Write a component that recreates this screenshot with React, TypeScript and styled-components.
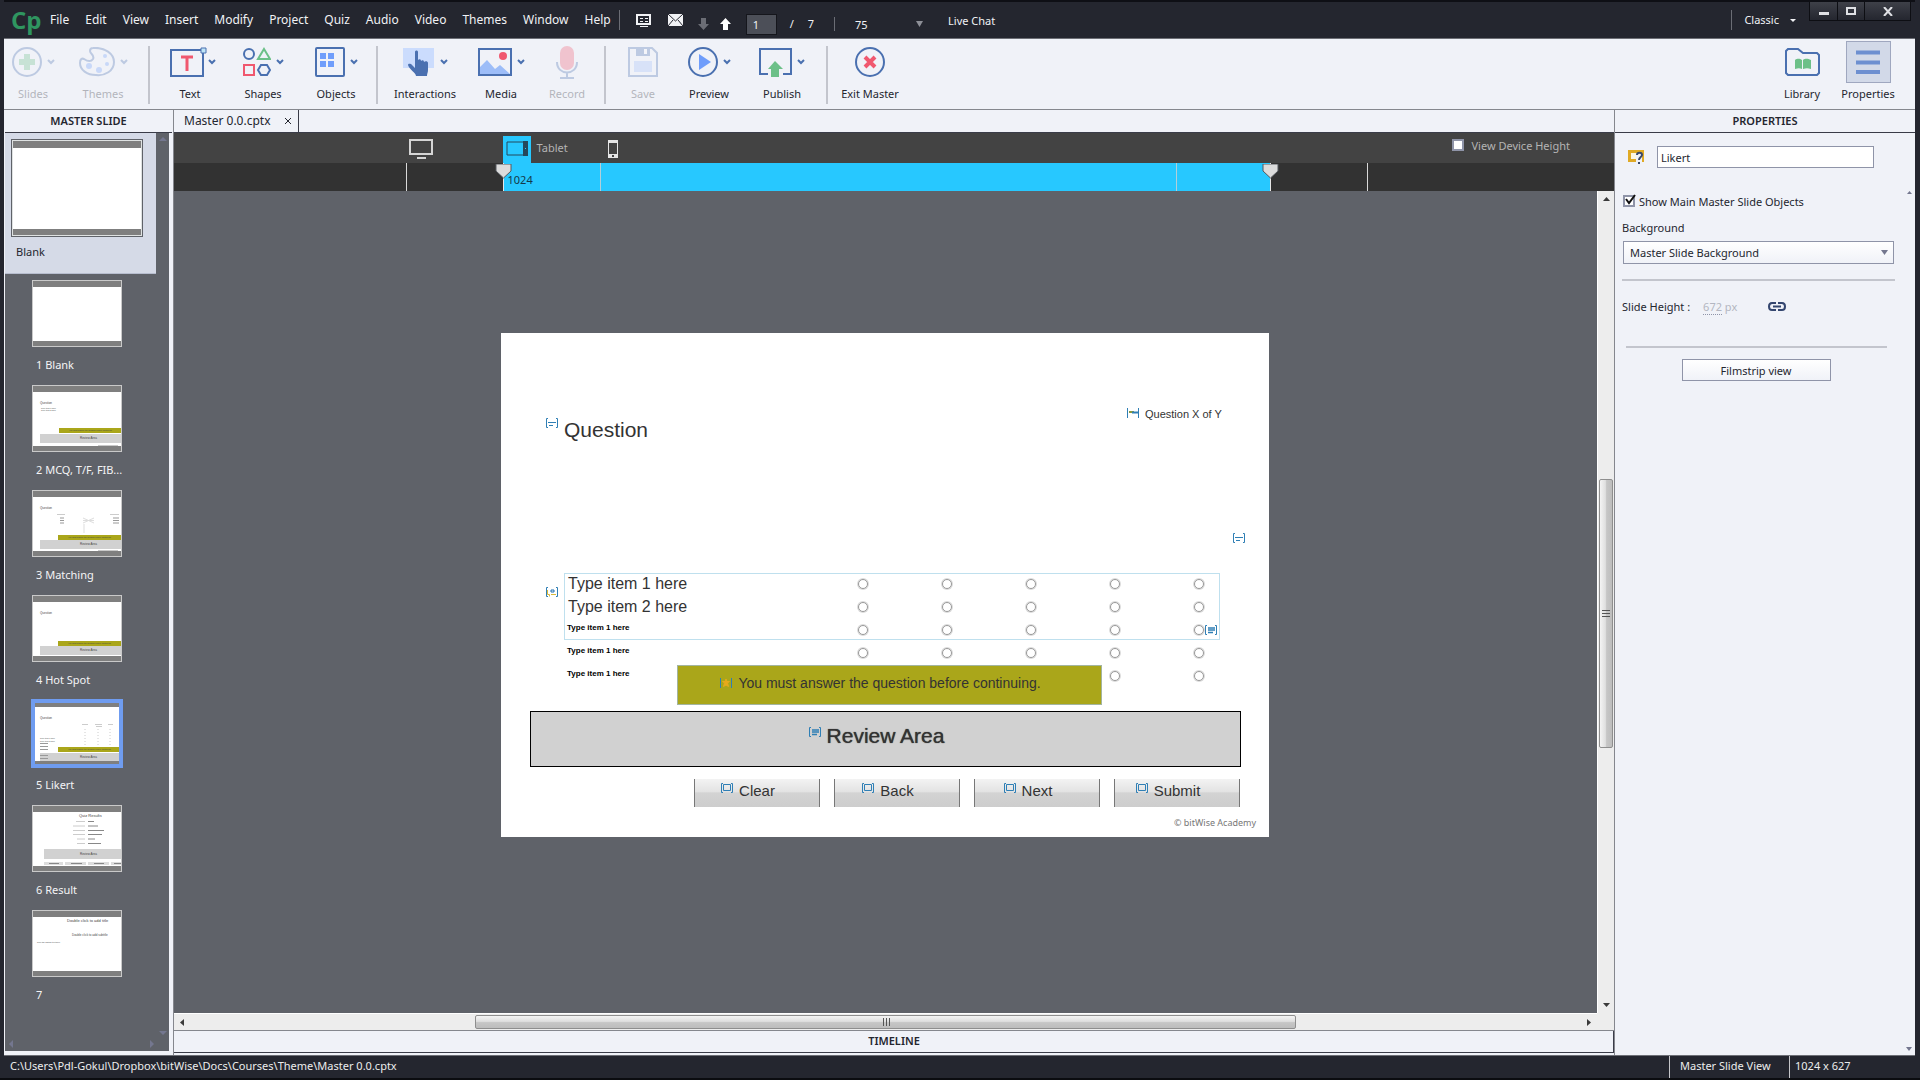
import React from 'react';
import styled, { createGlobalStyle, css } from 'styled-components';

const UI = '"Noto Sans", "Open Sans", sans-serif';
const SLIDE = '"Liberation Sans", Arial, sans-serif';

const c = {
  dark: '#24262f',
  panel: '#f0f2f8',
  canvas: '#5f6269',
  line: '#85878e',
  edge: '#3a3c48',
  blue: '#4a70b0',
  sky: '#6f9dfb',
  green: '#6cc088',
  red: '#f0586f',
  cyan: '#27c8ff',
  ink: '#24262f',
};

const Global = createGlobalStyle`
  *, *::before, *::after { box-sizing: border-box; }
  body { margin: 0; background: #101116; font-family: ${UI}; font-size: 11px; color: ${c.ink}; }
  button, input, select { font: inherit; color: inherit; margin: 0; }
  button { padding: 0; border: 0; background: none; cursor: pointer; }
  svg { display: block; flex: none; }
`;

const Window = styled.div`
  display: flex;
  flex-direction: column;
  min-height: 100vh;
  padding: 0 5px 0 4px;
  border-bottom: 2px solid #0b0c10;
  background: ${c.dark};
`;

/* ---------- title bar ---------- */

const TitleBar = styled.header`
  display: flex;
  align-items: center;
  height: 39px;
  padding: 0 4px 0 7px;
  border-top: 2px solid #0e0f15;
  border-bottom: 1px solid #6d6f76;
  color: #f1f2f5;
`;

const Logo = styled.span`
  width: 31px;
  font: bold 24px/32px 'Liberation Sans Narrow', 'Open Sans', sans-serif;
  color: #2f9560;
`;

const Menu = styled.nav`
  display: flex;
`;

const MenuItem = styled.button`
  padding: 0 8px;
  font-size: 12px;
  line-height: 20px;
`;

const BarRule = styled.span<{ $h?: number }>`
  width: 1px;
  height: ${(p) => p.$h ?? 20}px;
  background: #6b6d75;
`;

const QuickTools = styled.div`
  display: flex;
  align-items: center;
  padding-left: 16px;
`;

const PageNav = styled.div`
  display: flex;
  align-items: center;
  padding-top: 8px;
`;

const QuickButton = styled.button<{ $w: number }>`
  display: flex;
  width: ${(p) => p.$w}px;
`;

const PageInput = styled.input`
  width: 31px;
  height: 21px;
  padding: 0 6px;
  border: 1px solid #15161c;
  background: #4c4f58;
  outline: 0;
`;

const PageTotal = styled.span`
  display: flex;
  gap: 14px;
  padding: 0 20px 0 13px;
  line-height: 20px;
`;

const SelectWrap = styled.div`
  position: relative;
  display: flex;
  align-items: center;

  svg {
    position: absolute;
    right: 4px;
    pointer-events: none;
  }
`;

const ZoomSelect = styled.select`
  width: 92px;
  height: 21px;
  padding: 0 0 0 20px;
  border: 0;
  appearance: none;
  background: transparent;
  outline: 0;
`;

const ChatButton = styled.button`
  padding: 2px 0 0 21px;
  line-height: 20px;
`;

const TitleRight = styled.div`
  display: flex;
  align-items: center;
  align-self: stretch;
  margin-left: auto;
`;

const Workspace = styled.button`
  display: flex;
  align-items: center;
  gap: 11px;
  padding: 0 13px 0 12px;
  line-height: 20px;
`;

const Caption = styled.div`
  display: flex;
  align-self: flex-start;
  border: 1px solid #0d0e13;
  border-top: 0;
`;

const CaptionButton = styled.button<{ $w: number }>`
  display: flex;
  align-items: center;
  justify-content: center;
  width: ${(p) => p.$w}px;
  height: 18px;
  background: linear-gradient(#3e4048, #24262f);

  & + & {
    border-left: 1px solid #0d0e13;
  }
`;

/* ---------- tool bar ---------- */

const ToolBar = styled.div`
  display: flex;
  height: 71px;
  padding-right: 15px;
  border-bottom: 1px solid ${c.line};
  background: ${c.panel};
`;

const Tool = styled.button<{ $w: number }>`
  display: flex;
  flex-direction: column;
  align-items: center;
  width: ${(p) => p.$w}px;
  white-space: nowrap;

  &:disabled {
    opacity: 0.3;
    color: ${c.ink};
    cursor: default;
  }
`;

const ToolIcon = styled.span<{ $on?: boolean }>`
  display: flex;
  align-items: center;
  justify-content: center;
  gap: 5px;
  height: 42px;
  margin: 2px 0;
  ${(p) =>
    p.$on &&
    css`
      width: 45px;
      border: 1px solid #9fa7bf;
      background: #d2d9e8;
    `}
`;

const ToolLabel = styled.span`
  line-height: 18px;
`;

const ToolRule = styled.span`
  width: 2px;
  height: 58px;
  margin: 7px 4px 0;
  background: #c3c5cd;
`;

const Push = styled.span`
  flex: 1;
`;

/* ---------- panels ---------- */

const Body = styled.div`
  display: grid;
  grid-template-columns: 170px minmax(0, 1fr) 301px;
  flex: 1;
  background: ${c.panel};
`;

const PanelTitle = styled.h2`
  height: 23px;
  margin: 0;
  border-bottom: 1px solid ${c.edge};
  font-size: 11px;
  font-weight: 600;
  line-height: 21px;
  text-align: center;
`;

const LeftPanel = styled.aside`
  display: flex;
  flex-direction: column;
  padding: 0 1px 4px 1px;
  border-right: 1px solid ${c.line};
`;

const ListArea = styled.div`
  display: grid;
  grid-template-columns: 1fr 13px;
  flex: 1;
  margin-right: 3px;
  background: ${c.canvas};
`;

const ListScroll = styled.div`
  display: flex;
  flex-direction: column;
  justify-content: space-between;
  align-items: center;
  padding: 4px 0 16px;
`;

const SlideList = styled.div`
  display: flex;
  flex-direction: column;
`;

const ListFoot = styled.div`
  display: flex;
  justify-content: space-between;
  margin-top: auto;
  padding: 0 2px 3px 4px;
`;

const MasterCard = styled.button`
  display: flex;
  flex-direction: column;
  align-items: flex-start;
  height: 141px;
  margin-bottom: 6px;
  padding: 6px;
  border-bottom: 1px solid #b7bdce;
  background: #d5dae7;
`;

const MasterThumb = styled.span`
  width: 132px;
  height: 99px;
  border: 1px solid #5f6269;
  outline: 0;
  background: linear-gradient(#7f7f7f 0 8px, #fff 8px 89px, #7f7f7f 89px);
  box-shadow: inset 0 0 0 1px #dfe2e2;
`;

const MasterName = styled.span`
  padding: 6px 5px;
  line-height: 18px;
`;

const Item = styled.button`
  display: flex;
  flex-direction: column;
  align-items: flex-start;
  height: 105px;
  padding-left: 27px;
  color: #f4f4f6;
`;

const Thumb = styled.span<{ $on?: boolean }>`
  width: 90px;
  height: 67px;
  border: 1px solid #c9c9c9;
  background: #fff;
  ${(p) =>
    p.$on &&
    css`
      overflow: hidden;
      border: 3px solid #6f9cf0;
      box-shadow: 0 0 0 1px #6f9cf0;

      svg {
        margin: -2px;
      }
    `}
`;

const ItemName = styled.span`
  padding: 8px 4px 0;
  line-height: 20px;
`;

/* ---------- stage ---------- */

const Center = styled.main`
  display: flex;
  flex-direction: column;
  min-width: 0;
`;

const Tabs = styled.div`
  display: flex;
  height: 23px;
  border-bottom: 1px solid ${c.edge};
`;

const Tab = styled.div`
  display: flex;
  align-items: center;
  gap: 14px;
  padding: 0 7px 0 10px;
  border-right: 1px solid ${c.edge};
  font-size: 12px;
  line-height: 22px;
`;

const DeviceStrip = styled.div`
  display: grid;
  grid-template-columns: 1fr 960px 1fr;
  height: 30px;
  padding-right: 17px;
  background: #434343;
  color: #b4b4b4;
`;

const Devices = styled.div`
  display: flex;
  grid-column: 2;
  align-items: flex-end;
`;

const DeviceButton = styled.button<{ $w: number; $on?: boolean }>`
  display: flex;
  align-items: center;
  justify-content: center;
  width: ${(p) => p.$w}px;
  height: 27px;
  padding-bottom: 2px;
  background: ${(p) => (p.$on ? c.cyan : 'transparent')};
`;

const DeviceName = styled.span`
  width: 70px;
  padding: 0 6px;
  line-height: 30px;
`;

const DeviceGap = styled.span`
  width: 67px;
`;

const HeightCheck = styled.label`
  display: flex;
  align-items: center;
  gap: 8px;
  padding: 0 0 6px 86px;
  white-space: nowrap;
`;

const Check = styled.input`
  width: 12px;
  height: 12px;
  border: 2px solid #8f94a8;
  appearance: none;
  background: #fff;
`;

const Ruler = styled.div`
  display: flex;
  justify-content: center;
  height: 28px;
  padding-right: 15px;
  background: #323232;
`;

const RulerSide = styled.div<{ $end?: boolean }>`
  width: 97px;
  border: 0 solid #d9d9d9;
  border-width: ${(p) => (p.$end ? '0 1px 0 0' : '0 0 0 1px')};
`;

const RulerSpan = styled.div`
  position: relative;
  display: grid;
  grid-template-columns: 96px 1fr 94px;
  grid-template-rows: 100%;
  width: 768px;
  border: 1px solid #e6e6e6;
  border-width: 0 1px;
  background: ${c.cyan};
  color: #14394a;

  span {
    padding-left: 4px;
    line-height: 34px;
  }

  span + span {
    border-left: 1px solid #b3cfd9;
  }
`;

const Handle = styled.button<{ $end?: boolean }>`
  position: absolute;
  top: 1px;
  ${(p) => (p.$end ? 'right' : 'left')}: -9px;
`;

const Stage = styled.div`
  display: grid;
  grid-template-columns: minmax(0, 1fr) 17px;
  grid-template-rows: 1fr 17px;
  flex: 1;
  background: ${c.canvas};
`;

const Canvas = styled.div`
  display: flex;
  align-items: center;
  justify-content: center;
  padding: 0 1px 34px 0;
`;

const VScroll = styled.div`
  display: flex;
  flex-direction: column;
  align-items: center;
  border-left: 1px solid #fff;
  background: #ededed;
`;

const HScroll = styled.div`
  display: flex;
  align-items: center;
  border-top: 1px solid #fff;
  background: #ededed;
`;

const Corner = styled.div`
  background: #ededed;
`;

const ScrollArrow = styled.button`
  display: flex;
  align-items: center;
  justify-content: center;
  width: 16px;
  height: 16px;
`;

const Track = styled.span<{ $n: number }>`
  flex: ${(p) => p.$n} 1 0;
`;

const Grip = styled.div<{ $n: number; $v?: boolean }>`
  display: flex;
  align-items: center;
  justify-content: center;
  flex: ${(p) => p.$n} 1 0;
  ${(p) => (p.$v ? 'width' : 'height')}: 14px;
  border: 1px solid #8e8e8e;
  border-radius: 2px;
  background: linear-gradient(${(p) => (p.$v ? '90deg' : '180deg')}, #f4f4f4, #dfdfdf 45%, #c6c6c6 55%, #bdbdbd);
`;

const Timeline = styled.h2`
  height: 25px;
  margin: 0;
  border-top: 1px solid ${c.line};
  box-shadow: inset 0 -2px 0 ${c.panel}, inset 0 -3px 0 ${c.edge}, inset -1px 0 0 ${c.edge};
  font-size: 11px;
  font-weight: 600;
  line-height: 20px;
  text-align: center;
`;

/* ---------- slide objects on the free canvas ---------- */

const Slide = styled.section`
  position: relative;
  flex: none;
  width: 768px;
  height: 504px;
  background: #fff;
  color: #333;
  font-family: ${SLIDE};
`;

const Placed = styled.div<{ $x: number; $y: number; $w?: number; $h?: number }>`
  position: absolute;
  left: ${(p) => p.$x}px;
  top: ${(p) => p.$y}px;
  width: ${(p) => (p.$w ? `${p.$w}px` : 'auto')};
  height: ${(p) => (p.$h ? `${p.$h}px` : 'auto')};
  white-space: nowrap;
`;

const Tagged = styled.span`
  position: relative;

  svg {
    position: absolute;
    right: 100%;
    top: 0;
    margin-right: 6px;
  }
`;

const Heading = styled(Placed)`
  font-size: 21px;
  line-height: 24px;
`;

const Progress = styled(Placed)`
  font-size: 11px;
  line-height: 12px;
`;

const LikertFrame = styled(Placed)`
  border: 1px solid #bfe0ee;
`;

const LikertRow = styled.div<{ $small?: boolean }>`
  display: grid;
  grid-template-columns: 257px repeat(5, 84px);
  align-items: center;
  height: 23px;
  font-size: ${(p) => (p.$small ? 8 : 16)}px;
  font-weight: ${(p) => (p.$small ? 'bold' : 'normal')};
  color: ${(p) => (p.$small ? '#000' : '#333')};
`;

const RowText = styled.span<{ $small?: boolean }>`
  padding: ${(p) => (p.$small ? '0 0 5px 3px' : '0 0 0 4px')};
`;

const Radio = styled.input`
  justify-self: center;
  width: 10px;
  height: 10px;
  margin: 0;
  border: 1px solid #9a9a9a;
  border-radius: 50%;
  appearance: none;
  background: #fff;
  box-shadow: 0 0 0 1px #dcdcdc;
`;

const Warning = styled(Placed)`
  border: 1px solid #a3b5a0;
  background: #aaa61a;
  font-size: 14px;
  line-height: 34px;
  text-align: center;

  svg {
    top: 3px;
  }
`;

const Review = styled(Placed)`
  border: 1px solid #000;
  background: #d1d1d1;
  font-size: 21px;
  line-height: 47px;
  text-align: center;
  text-shadow: 0 0 1px #333;

  svg {
    top: 3px;
  }
`;

const NavRow = styled(Placed)`
  display: grid;
  grid-template-columns: repeat(4, 126px);
  justify-content: space-between;
`;

const NavButton = styled.button`
  height: 28px;
  padding-bottom: 6px;
  border: 1px solid #777;
  border-width: 0 1px;
  background: linear-gradient(#f3f3f3, #e3e3e3 45%, #d3d3d3 50%, #cdcdcd);
  font-size: 15px;

  svg {
    top: 1px;
  }
`;

const Copyright = styled(Placed)`
  font-family: ${UI};
  font-size: 9px;
  line-height: 12px;
  color: #777;
`;

/* ---------- properties ---------- */

const RightPanel = styled.aside`
  display: flex;
  flex-direction: column;
  border-left: 1px solid ${c.line};
`;

const PropBody = styled.form`
  display: grid;
  grid-template-columns: 1fr 12px;
  flex: 1;
`;

const Fields = styled.div`
  display: flex;
  flex-direction: column;
  padding: 13px 8px 0 7px;
`;

const NameRow = styled.div`
  display: flex;
  align-items: center;
  gap: 13px;
  padding: 0 21px 0 6px;

  input {
    flex: 1;
    min-width: 0;
    height: 22px;
    padding: 0 3px;
    border: 1px solid #8f94a8;
    background: #fff;
    outline: 0;
  }
`;

const CheckRow = styled.label`
  display: flex;
  align-items: center;
  gap: 4px;
  height: 20px;
  margin-top: 23px;
  padding-left: 1px;
`;

const TickBox = styled.span`
  position: relative;
  display: flex;

  svg {
    position: absolute;
    top: -1px;
    left: 0;
    pointer-events: none;
  }
`;

const FieldLabel = styled.label`
  margin-top: 7px;
  line-height: 20px;
`;

const BackgroundSelect = styled.select`
  width: 100%;
  height: 23px;
  padding: 0 6px;
  border: 1px solid #8f94a8;
  appearance: none;
  background: linear-gradient(#fff, #f0f2f8);
  outline: 0;
`;

const SelectRow = styled(SelectWrap)`
  margin: 3px 1px 0;

  svg {
    right: 6px;
  }
`;

const Divider = styled.hr<{ $inset?: boolean }>`
  width: auto;
  height: 2px;
  margin: ${(p) => (p.$inset ? '30px 8px 0 4px' : '15px 0 15px')};
  border: 0;
  background: #c3c5cd;
`;

const HeightRow = styled.div`
  display: flex;
  align-items: center;
  height: 20px;
`;

const HeightValue = styled.span`
  width: 65px;
  margin-left: 13px;
  color: #b3b6c1;

  u {
    text-decoration: none;
    border-bottom: 1px dotted #8f94a8;
  }
`;

const FilmButton = styled.button`
  align-self: center;
  width: 149px;
  height: 22px;
  margin: 11px 5px 0 0;
  border: 1px solid #8f94a8;
  background: linear-gradient(#fff, #f0f2f8);
`;

const PropScroll = styled.div`
  display: flex;
  flex-direction: column;
  align-items: center;
  justify-content: space-between;
  padding: 58px 0 4px;
`;

/* ---------- status bar ---------- */

const Status = styled.footer`
  display: flex;
  height: 23px;
  padding: 0 0 0 6px;
  border-top: 1px solid #6d6f76;
  color: #eceded;
  line-height: 19px;
`;

const StatusCell = styled.span<{ $w: number }>`
  width: ${(p) => p.$w}px;
  padding-left: ${(p) => (p.$w > 121 ? 5 : 10)}px;
  border-left: 1px solid #c5c6ca;
`;

/* ---------- drawings ---------- */

const Arrow = ({ d, fill = '#3a3a3a', w = 8, h = 4 }: { d: 'u' | 'd' | 'l' | 'r'; fill?: string; w?: number; h?: number }) => {
  const side = d === 'l' || d === 'r';
  const W = side ? h : w;
  const H = side ? w : h;
  const pts = {
    u: `0,${H} ${W / 2},0 ${W},${H}`,
    d: `0,0 ${W},0 ${W / 2},${H}`,
    l: `${W},0 0,${H / 2} ${W},${H}`,
    r: `0,0 ${W},${H / 2} 0,${H}`,
  }[d];
  return (
    <svg width={W} height={H} aria-hidden="true">
      <polygon points={pts} fill={fill} />
    </svg>
  );
};

const Chevron = () => (
  <svg width="8" height="6" viewBox="0 0 8 6" fill="none" stroke={c.blue} strokeWidth="2">
    <path d="M1 1l3 3 3-3" />
  </svg>
);

const Tag = ({ kind = 'text' }: { kind?: 'text' | 'solid' | 'star' | 'box' | 'arrow' | 'count' }) => (
  <svg width="12" height="10" viewBox="0 0 12 10" fill="none" stroke="#2f7fb5">
    {kind === 'star' || kind === 'count' ? <path d="M.5 0v10M11.5 0v10" /> : <path d="M2 .5H.5v9H2M10 .5h1.500v9H10" />}
    {kind === 'text' && <path d="M2 4.500h8M3 7.500h4" />}
    {kind === 'solid' && <path d="M3 3h7M3 5h7M3 7.500h5" strokeWidth="1.500" />}
    {kind === 'box' && <path d="M2.500 1.500h7v6h-7z" />}
    {kind === 'star' && <path d="M6 1l1 2.500h2.500L7.500 5l1 3.500L6 7 3.500 8.500l1-3.500-2-1.500H5z" fill="#e7a91b" stroke="#e7a91b" />}
    {kind === 'count' && (
      <>
        <path d="M2 4h5" stroke="#8a9a3c" strokeWidth="2" />
        <path d="M5 4.500h6" strokeWidth="2" />
      </>
    )}
    {kind === 'arrow' && (
      <>
        <path d="M5 3h3v2H5z" stroke="#1f6fb0" />
        <path d="M1.500 3v4.500h2v2M5 7.500h5" stroke="#d8b93a" />
      </>
    )}
  </svg>
);

const Bars = ({ children }: { children?: React.ReactNode }) => (
  <svg width="88" height="65" viewBox="0 0 88 65" fontFamily={SLIDE} fill="#444">
    {children}
    <rect width="88" height="6" fill="#7f7f7f" />
    <rect y="60" width="88" height="5" fill="#7f7f7f" />
  </svg>
);

const QuizBase = ({ y, r, x = 25 }: { y: number; r: number; x?: number }) => (
  <>
    <text x="7" y="18" fontSize="3">Question</text>
    <rect x={x} y={y} width={88 - x} height="5" fill="#aaa61a" />
    <text x={x + 10} y={y + 3} fontSize="2">You must answer the question before continuing.</text>
    <rect x="7" y={r} width="81" height="9" fill="#d1d1d1" />
    <text x="47" y={r + 5} fontSize="3">Review Area</text>
  </>
);

const thumbs: { name: string; on?: boolean; art: React.ReactNode }[] = [
  { name: '1 Blank', art: <Bars /> },
  {
    name: '2 MCQ, T/F, FIB...',
    art: (
      <Bars>
        <QuizBase y={42} r={48} x={26} />
        <text x="8" y="23" fontSize="2">Type item 1 here</text>
        <text x="8" y="25" fontSize="2">Type item 2 here</text>
        <path d="M65 59.500h20" stroke="#c9c9c9" />
      </Bars>
    ),
  },
  {
    name: '3 Matching',
    art: (
      <Bars>
        <QuizBase y={44} r={49} />
        <path d="M24 23.500h8M77 23.500h9" stroke="#ccc" />
        <path d="M27 27h4M27 29.500h4M27 32h4M80 27h6M80 29.500h6M80 32h6" stroke="#999" />
        <path d="M50 27l11 5M50 29.500h11M50 32l11-5M51 33v9" stroke="#ddd" />
        <path d="M65 59.500h20" stroke="#c9c9c9" />
      </Bars>
    ),
  },
  { name: '4 Hot Spot', art: <Bars><QuizBase y={45} r={50} /></Bars> },
  {
    name: '5 Likert',
    on: true,
    art: (
      <Bars>
        <QuizBase y={46} r={52} />
        <path d="M49 23.500h6M62 23.500h7M63 25.500h6M75 23.500h5" stroke="#ccc" />
        <text x="7" y="38" fontSize="2">Type item 1 here</text>
        <text x="7" y="41" fontSize="2">Type item 2 here</text>
        <path d="M7 42.500h8M7 45.500h8M7 48.500h8M7 54.500h8M7 57.500h8" stroke="#999" />
        <path d="M52 28v18M65 28v18M77 28v18" stroke="#ccc" strokeDasharray="1 2" />
      </Bars>
    ),
  },
  {
    name: '6 Result',
    art: (
      <Bars>
        <text x="46" y="11" fontSize="4">Quiz Results</text>
        <path d="M43 15.500h9M40 20h12M40 24.500h12M40 28.500h12M44 33h8M44 37.500h8" stroke="#ccc" />
        <path d="M55 15.500h6M55 20h10M55 24.500h16M55 28.500h14M55 33h7M55 37.500h13" stroke="#888" />
        <rect x="11" y="43" width="77" height="10" fill="#d1d1d1" />
        <text x="47" y="49" fontSize="3">Review Area</text>
        <path d="M11 57.500h19M32 57.500h21M55 57.500h21M78 57.500h10" stroke="#ddd" strokeWidth="3" />
        <path d="M16 57.500h10M38 57.500h11M61 57.500h10M81 57.500h7" stroke="#888" />
      </Bars>
    ),
  },
  {
    name: '7',
    art: (
      <Bars>
        <text x="34" y="11" fontSize="4">Double click to add title</text>
        <text x="39" y="25" fontSize="3">Double click to add subtitle</text>
        <text x="4" y="32" fontSize="2">Type the caption text here</text>
      </Bars>
    ),
  },
];

const line = { fill: 'none', stroke: c.blue, strokeWidth: 2 } as const;

const art = {
  slides: (
    <svg width="30" height="30" viewBox="0 0 30 30">
      <circle cx="15" cy="15" r="14" {...line} />
      <path d="M12 7h6v5h5v6h-5v5h-6v-5H7v-6h5z" fill={c.green} />
    </svg>
  ),
  themes: (
    <svg width="36" height="30" viewBox="0 0 36 30">
      <path d="M14 1c12-1 21 6 21 14 0 9-9 14-18 13C8 28 1 23 1 16c0-4 2-5 4-4 3 2 7 3 9 0 2-4-3-5-3-8 0-2 1-3 3-3z" {...line} />
      <g fill={c.sky}>
        <circle cx="10" cy="19" r="3" />
        <circle cx="20" cy="23" r="3" />
        <circle cx="28" cy="17" r="2" />
        <circle cx="26" cy="9" r="2" />
      </g>
    </svg>
  ),
  text: (
    <svg width="39" height="30" viewBox="-6 0 39 30" overflow="visible">
      <path d="M1 3h32v26H1z" {...line} />
      <path d="M11 10h12M17 10v14" fill="none" stroke={c.red} strokeWidth="3" />
      <path d="M31 1h5v5h-5z" fill="#bfe4f7" stroke={c.blue} />
    </svg>
  ),
  shapes: (
    <svg width="28" height="30" viewBox="0 0 28 30">
      <circle cx="6" cy="7" r="5" {...line} />
      <path d="M21 2l6 10H15z" fill="none" stroke={c.green} strokeWidth="2" />
      <path d="M1 18h10v10H1z" fill="none" stroke={c.red} strokeWidth="2" />
      <path d="M18 18h6l3 5-3 5h-6l-3-5z" {...line} />
    </svg>
  ),
  objects: (
    <svg width="30" height="30" viewBox="0 0 30 30">
      <rect x="1" y="1" width="28" height="28" rx="1" {...line} />
      <path d="M5 6h6v6H5zM13 6h6v6h-6zM5 14h6v6H5zM13 14h6v6h-6z" fill={c.sky} />
    </svg>
  ),
  interactions: (
    <svg width="32" height="30" viewBox="0 0 32 30">
      <path d="M0 1h31v20H0z" fill="#cbdcfd" />
      <path d="M12 5c0-2 3-2 3 0v8c1-1 3-1 3 1 1-1 3-1 3 1 1-1 4-1 4 1v7c0 3-1 3-1 6H13c0-3-7-7-8-11 0-1 2-2 4 0l3 3z" fill={c.blue} />
    </svg>
  ),
  media: (
    <svg width="34" height="30" viewBox="0 0 34 30">
      <path d="M2 27V20l7-7 8 9 5-4 10 9z" fill="#9dbdf8" />
      <path d="M1 2h32v26H1z" {...line} />
      <circle cx="25" cy="9" r="4" fill={c.red} />
    </svg>
  ),
  record: (
    <svg width="22" height="33" viewBox="0 0 22 33">
      <rect x="4" y="0" width="14" height="24" rx="7" fill={c.red} />
      <path d="M1 16c0 14 20 14 20 0M11 26v6M4 32h14" {...line} />
    </svg>
  ),
  save: (
    <svg width="30" height="30" viewBox="0 0 30 30">
      <path d="M1 1h23l5 5v23H1z" {...line} />
      <path d="M8 1h14v8H8z" fill={c.blue} />
      <path d="M16 2h3v5h-3z" fill="#fff" />
      <path d="M6 14h18v11H6z" fill={c.sky} opacity=".6" />
    </svg>
  ),
  preview: (
    <svg width="30" height="30" viewBox="0 0 30 30">
      <circle cx="15" cy="15" r="14" {...line} />
      <path d="M11 7l12 8-12 8z" fill={c.sky} />
    </svg>
  ),
  publish: (
    <svg width="33" height="30" viewBox="0 0 33 30">
      <path d="M9 27H1V2h31v25h-8" {...line} />
      <path d="M16 14l8 8h-4v8h-8v-8H9z" fill={c.green} />
    </svg>
  ),
  exit: (
    <svg width="30" height="30" viewBox="0 0 30 30">
      <circle cx="15" cy="15" r="14" {...line} />
      <path d="M10 10l10 10M20 10L10 20" stroke={c.red} strokeWidth="4" />
    </svg>
  ),
  library: (
    <svg width="35" height="28" viewBox="0 0 35 28">
      <path d="M3 1h10l5 4h14l2 2v18l-2 2H3l-2-2V3z" {...line} />
      <path d="M10 12c3-2 5-1 7 0v9c-2-1-4-1-7 0zM18 12c3-2 5-1 8 0v9c-3-1-5-1-8 0z" fill={c.green} />
    </svg>
  ),
  properties: (
    <svg width="24" height="25" viewBox="0 0 24 25">
      <path d="M0 2.500h24M0 12.500h24M0 22h24" stroke="#6d8fd0" strokeWidth="4" />
    </svg>
  ),
};

type ToolSpec = { name: string; icon: keyof typeof art; w: number; more?: boolean; off?: boolean };

const groups: ToolSpec[][] = [
  [
    { name: 'Slides', icon: 'slides', w: 58, more: true, off: true },
    { name: 'Themes', icon: 'themes', w: 82, more: true, off: true },
  ],
  [
    { name: 'Text', icon: 'text', w: 72, more: true },
    { name: 'Shapes', icon: 'shapes', w: 74, more: true },
    { name: 'Objects', icon: 'objects', w: 72, more: true },
  ],
  [
    { name: 'Interactions', icon: 'interactions', w: 86, more: true },
    { name: 'Media', icon: 'media', w: 66, more: true },
    { name: 'Record', icon: 'record', w: 66, off: true },
  ],
  [
    { name: 'Save', icon: 'save', w: 66, off: true },
    { name: 'Preview', icon: 'preview', w: 66, more: true },
    { name: 'Publish', icon: 'publish', w: 80, more: true },
  ],
  [{ name: 'Exit Master', icon: 'exit', w: 76 }],
];

const menus = ['File', 'Edit', 'View', 'Insert', 'Modify', 'Project', 'Quiz', 'Audio', 'Video', 'Themes', 'Window', 'Help'];

const rows = [
  { text: 'Type item 1 here' },
  { text: 'Type item 2 here' },
  { text: 'Type item 1 here', small: true },
  { text: 'Type item 1 here', small: true },
  { text: 'Type item 1 here', small: true },
];

const ArrowIcon = ({ up, fill }: { up?: boolean; fill: string }) => (
  <svg width="11" height="12" viewBox="0 0 11 12">
    <path d={up ? 'M5.500 0L11 6H8v6H3V6H0z' : 'M5.500 12L11 6H8V0H3v6H0z'} fill={fill} />
  </svg>
);

const RulerHandle = () => (
  <svg width="17" height="15" viewBox="0 0 17 15">
    <path d="M1 0h15v7l-7.500 7L1 7z" fill="#dcdcdc" stroke="#55595e" />
  </svg>
);

const GripLines = ({ v }: { v?: boolean }) => (
  <svg width="8" height="8" viewBox="0 0 8 8">
    <path d={v ? 'M0 1.500h8M0 4.500h8M0 7.500h8' : 'M1.500 0v8M4.500 0v8M7.500 0v8'} stroke="#555" />
  </svg>
);

export default function App() {
  return (
    <Window>
      <Global />
      <TitleBar>
        <Logo>Cp</Logo>
        <Menu>
          {menus.map((m) => (
            <MenuItem key={m}>{m}</MenuItem>
          ))}
        </Menu>
        <BarRule />
        <QuickTools>
          <QuickButton $w={32} aria-label="Preview in browser">
            <svg width="15" height="13" viewBox="0 0 15 13" fill="none" stroke="#f1f2f5">
              <path d="M1 1h13v9H1z" strokeWidth="2" />
              <path d="M4 4.500h3M9 4.500h3M4 7.500h3M9 7.500h3M4 12.500h8" />
            </svg>
          </QuickButton>
          <QuickButton $w={30} aria-label="Mail">
            <svg width="15" height="12" viewBox="0 0 15 12">
              <path d="M0 0h15v12H0z" fill="#f1f2f5" />
              <path d="M0 0l7.500 7L15 0M0 12l5-6M15 12l-5-6" fill="none" stroke={c.dark} />
            </svg>
          </QuickButton>
          <PageNav>
            <QuickButton $w={22} aria-label="Next slide">
              <ArrowIcon fill="#6b6d75" />
            </QuickButton>
            <QuickButton $w={26} aria-label="Previous slide">
              <ArrowIcon up fill="#fff" />
            </QuickButton>
            <PageInput aria-label="Slide number" defaultValue="1" />
            <PageTotal>
              <span>/</span>
              <span>7</span>
            </PageTotal>
            <BarRule $h={14} />
            <SelectWrap>
              <ZoomSelect aria-label="Zoom">
                <option>75</option>
              </ZoomSelect>
              <Arrow d="d" fill="#8d8f97" w={7} h={6} />
            </SelectWrap>
          </PageNav>
          <ChatButton>Live Chat</ChatButton>
        </QuickTools>
        <TitleRight>
          <BarRule />
          <Workspace>
            Classic <Arrow d="d" fill="#f1f2f5" w={6} h={3} />
          </Workspace>
          <Caption>
            <CaptionButton $w={27} aria-label="Minimize">
              <svg width="10" height="8" viewBox="0 0 10 8">
                <path d="M0 5h10v3H0z" fill="#dfe0e4" />
              </svg>
            </CaptionButton>
            <CaptionButton $w={27} aria-label="Maximize">
              <svg width="10" height="8" viewBox="0 0 10 8">
                <path d="M1 1h8v6H1z" fill="none" stroke="#dfe0e4" strokeWidth="2" />
              </svg>
            </CaptionButton>
            <CaptionButton $w={46} aria-label="Close">
              <svg width="10" height="9" viewBox="0 0 10 9">
                <path d="M1 0l8 9M9 0L1 9" stroke="#dfe0e4" strokeWidth="2" />
              </svg>
            </CaptionButton>
          </Caption>
        </TitleRight>
      </TitleBar>

      <ToolBar>
        {groups.map((g, i) => (
          <React.Fragment key={i}>
            {i > 0 && <ToolRule />}
            {g.map((t) => (
              <Tool key={t.name} $w={t.w} disabled={t.off}>
                <ToolIcon>
                  {art[t.icon]}
                  {t.more && <Chevron />}
                </ToolIcon>
                <ToolLabel>{t.name}</ToolLabel>
              </Tool>
            ))}
          </React.Fragment>
        ))}
        <Push />
        <Tool $w={68}>
          <ToolIcon>{art.library}</ToolIcon>
          <ToolLabel>Library</ToolLabel>
        </Tool>
        <Tool $w={64}>
          <ToolIcon $on>{art.properties}</ToolIcon>
          <ToolLabel>Properties</ToolLabel>
        </Tool>
      </ToolBar>

      <Body>
        <LeftPanel>
          <PanelTitle>MASTER SLIDE</PanelTitle>
          <ListArea>
            <SlideList>
              <MasterCard>
                <MasterThumb />
                <MasterName>Blank</MasterName>
              </MasterCard>
              {thumbs.map((t) => (
                <Item key={t.name}>
                  <Thumb $on={t.on}>
                    {t.art}
                  </Thumb>
                  <ItemName>{t.name}</ItemName>
                </Item>
              ))}
              <ListFoot>
                <Arrow d="l" fill="#74778f" />
                <Arrow d="r" fill="#74778f" />
              </ListFoot>
            </SlideList>
            <ListScroll>
              <Arrow d="u" fill="#74778f" />
              <Arrow d="d" fill="#74778f" />
            </ListScroll>
          </ListArea>
        </LeftPanel>

        <Center>
          <Tabs>
            <Tab>
              Master 0.0.cptx
              <button aria-label="Close tab">
                <svg width="6" height="6" viewBox="0 0 6 6" stroke={c.ink}>
                  <path d="M0 0l6 6M6 0L0 6" />
                </svg>
              </button>
            </Tab>
          </Tabs>
          <DeviceStrip>
            <Devices>
              <DeviceButton $w={30} aria-label="Desktop">
                <svg width="24" height="20" viewBox="0 0 24 20">
                  <path d="M1 1h22v14H1z" fill="none" stroke="#d5d5d5" strokeWidth="2" />
                  <path d="M8 18h9v2H8z" fill="#d5d5d5" />
                </svg>
              </DeviceButton>
              <DeviceGap />
              <DeviceButton $w={28} $on aria-label="Tablet">
                <svg width="22" height="15" viewBox="0 0 22 15">
                  <path d="M1 1h20v13H1z" fill="none" stroke="#25485c" />
                  <path d="M17 0h5v15h-5z" fill="#25485c" />
                  <path d="M19 7h1v1h-1z" fill={c.cyan} />
                </svg>
              </DeviceButton>
              <DeviceName>Tablet</DeviceName>
              <DeviceButton $w={24} aria-label="Phone">
                <svg width="10" height="18" viewBox="0 0 10 18">
                  <path d="M0 0h10v18H0z" fill="#e6e6e6" />
                  <path d="M1 3h8v11H1zM4 15h2v2H4z" fill="#434343" />
                </svg>
              </DeviceButton>
            </Devices>
            <HeightCheck>
              <Check type="checkbox" />
              View Device Height
            </HeightCheck>
          </DeviceStrip>
          <Ruler>
            <RulerSide />
            <RulerSpan>
              <span>1024</span>
              <span />
              <span />
              <Handle aria-label="Left edge">
                <RulerHandle />
              </Handle>
              <Handle $end aria-label="Right edge">
                <RulerHandle />
              </Handle>
            </RulerSpan>
            <RulerSide $end />
          </Ruler>
          <Stage>
            <Canvas>
              <Slide>
                <Heading $x={63} $y={85}>
                  <Tagged>
                    <Tag />
                    Question
                  </Tagged>
                </Heading>
                <Progress $x={644} $y={75}>
                  <Tagged>
                    <Tag kind="count" />
                    Question X of Y
                  </Tagged>
                </Progress>
                <Placed $x={732} $y={200}>
                  <Tag />
                </Placed>
                <LikertFrame $x={63} $y={240} $w={656} $h={67} />
                <Placed $x={45} $y={254}>
                  <Tag kind="arrow" />
                </Placed>
                <Placed $x={63} $y={239}>
                  {rows.map((r, i) => (
                    <LikertRow key={i} $small={r.small} role="radiogroup" aria-label={r.text}>
                      <RowText $small={r.small}>{r.text}</RowText>
                      {[1, 2, 3, 4, 5].map((n) => (
                        <Radio key={n} type="radio" name={`item-${i}`} aria-label={`Answer ${n}`} />
                      ))}
                    </LikertRow>
                  ))}
                </Placed>
                <Placed $x={704} $y={292}>
                  <Tag kind="solid" />
                </Placed>
                <Warning $x={176} $y={332} $w={425} $h={40}>
                  <Tagged>
                    <Tag kind="star" />
                    You must answer the question before continuing.
                  </Tagged>
                </Warning>
                <Review $x={29} $y={378} $w={711} $h={56}>
                  <Tagged>
                    <Tag kind="solid" />
                    Review Area
                  </Tagged>
                </Review>
                <NavRow $x={193} $y={446} $w={546}>
                  {['Clear', 'Back', 'Next', 'Submit'].map((n) => (
                    <NavButton key={n}>
                      <Tagged>
                        <Tag kind="box" />
                        {n}
                      </Tagged>
                    </NavButton>
                  ))}
                </NavRow>
                <Copyright $x={673} $y={484}>© bitWise Academy</Copyright>
              </Slide>
            </Canvas>
            <VScroll>
              <ScrollArrow aria-label="Scroll up">
                <Arrow d="u" w={7} />
              </ScrollArrow>
              <Track $n={273} />
              <Grip $v $n={267}>
                <GripLines v />
              </Grip>
              <Track $n={250} />
              <ScrollArrow aria-label="Scroll down">
                <Arrow d="d" w={7} />
              </ScrollArrow>
            </VScroll>
            <HScroll>
              <ScrollArrow aria-label="Scroll left">
                <Arrow d="l" w={7} />
              </ScrollArrow>
              <Track $n={285} />
              <Grip $n={821}>
                <GripLines />
              </Grip>
              <Track $n={285} />
              <ScrollArrow aria-label="Scroll right">
                <Arrow d="r" w={7} />
              </ScrollArrow>
            </HScroll>
            <Corner />
          </Stage>
          <Timeline>TIMELINE</Timeline>
        </Center>

        <RightPanel>
          <PanelTitle>PROPERTIES</PanelTitle>
          <PropBody>
            <Fields>
              <NameRow>
                <svg width="16" height="14" viewBox="0 0 16 14">
                  <path d="M1.500 1.500h13v9h-13z" fill="#fbf6e4" stroke="#e0aa25" strokeWidth="3" />
                  <path d="M8 3h6v11H8z" fill="#f0f2f8" />
                  <path d="M9 5c0-3 5-3 5 0 0 2-3 2-3 5M11 12v2" fill="none" stroke="#39486b" strokeWidth="2" />
                </svg>
                <input aria-label="Name" defaultValue="Likert" />
              </NameRow>
              <CheckRow>
                <TickBox>
                  <Check type="checkbox" defaultChecked />
                  <svg width="13" height="11" viewBox="0 0 13 11">
                    <path d="M3 5l3 4 6-8" fill="none" stroke="#111" strokeWidth="2" />
                  </svg>
                </TickBox>
                Show Main Master Slide Objects
              </CheckRow>
              <FieldLabel htmlFor="bg">Background</FieldLabel>
              <SelectRow>
                <BackgroundSelect id="bg">
                  <option>Master Slide Background</option>
                </BackgroundSelect>
                <Arrow d="d" fill="#74778f" w={7} h={5} />
              </SelectRow>
              <Divider />
              <HeightRow>
                Slide Height :
                <HeightValue>
                  <u>672</u> px
                </HeightValue>
                <button type="button" aria-label="Link height">
                  <svg width="18" height="9" viewBox="0 0 18 9" fill="none" stroke="#34466f" strokeWidth="2">
                    <path d="M8 1H4C0 1 0 8 4 8h4M10 1h4c4 0 4 7 0 7h-4M5 4.500h8" />
                  </svg>
                </button>
              </HeightRow>
              <Divider $inset />
              <FilmButton type="button">Filmstrip view</FilmButton>
            </Fields>
            <PropScroll>
              <Arrow d="u" fill="#74778f" w={5} h={3} />
              <Arrow d="d" fill="#74778f" w={6} h={4} />
            </PropScroll>
          </PropBody>
        </RightPanel>
      </Body>

      <Status>
        <span>C:\Users\Pdl-Gokul\Dropbox\bitWise\Docs\Courses\Theme\Master 0.0.cptx</span>
        <Push />
        <StatusCell $w={120}>Master Slide View</StatusCell>
        <StatusCell $w={126}>1024 x 627</StatusCell>
      </Status>
    </Window>
  );
}
